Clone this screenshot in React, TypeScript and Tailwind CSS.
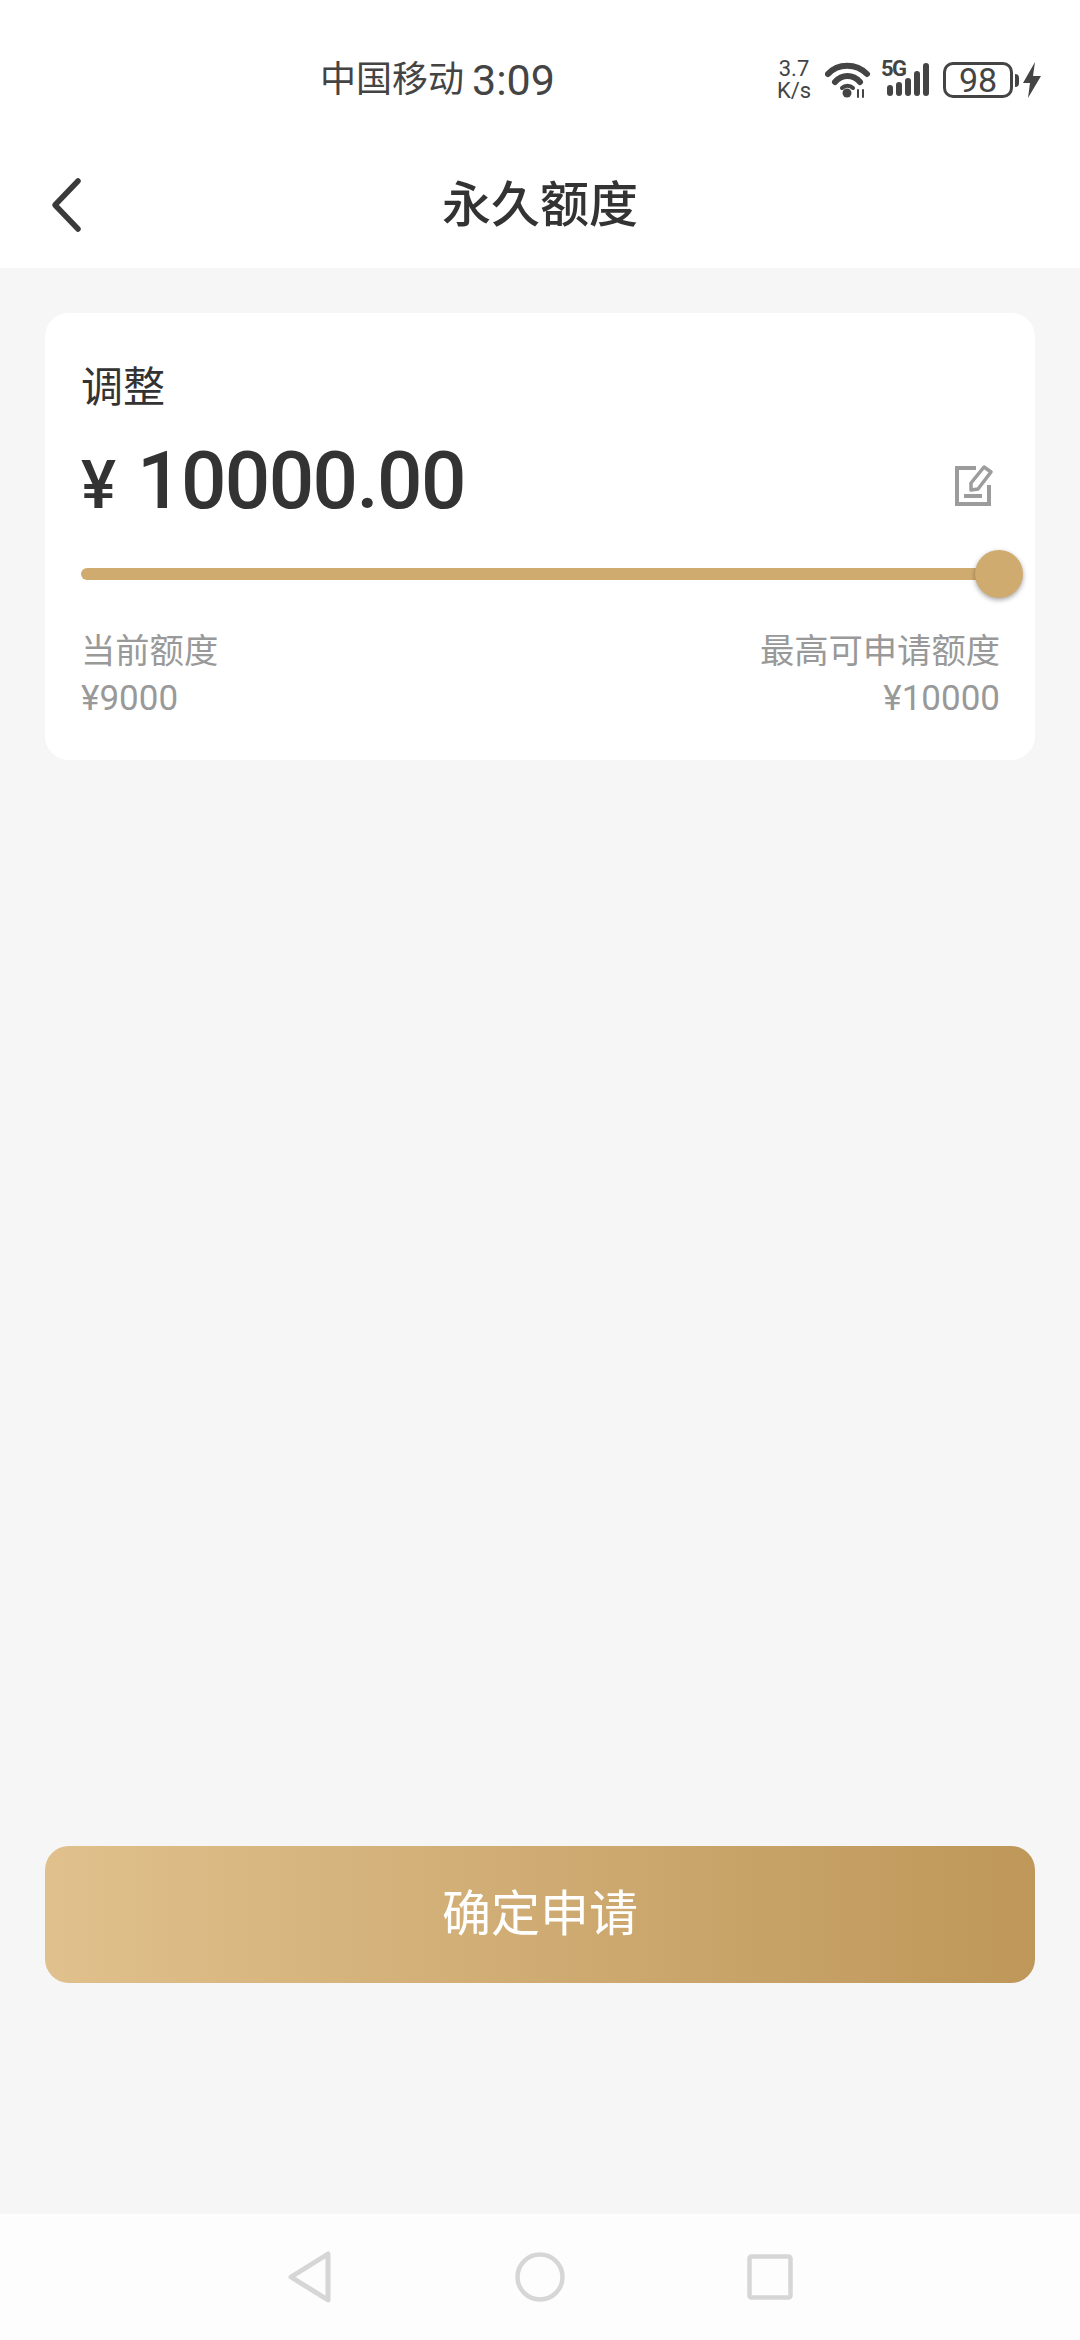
const font = { fontFamily: '"Roboto", "Noto Sans CJK SC", sans-serif' };

const StatusBar = () => (
  <div className="flex h-[110px] items-center pt-[50px] text-[#444]">
    <div className="ml-[320px] flex items-center">
      <span className="text-[36px] leading-none">中国移动</span>
      <span className="ml-[8px] text-[43px] leading-none">3:09</span>
    </div>
    <div className="ml-auto mr-[38px] flex items-center">
      <div className="flex w-[36px] flex-col items-center text-[22px] leading-[22px]">
        <span>3.7</span>
        <span>K/s</span>
      </div>
      <svg width="46" height="36" viewBox="0 0 46 36" className="ml-[13px]" fill="none" stroke="#444" strokeLinecap="round">
        <path d="M3 12 C13 1 31 1 42 12" strokeWidth="6" />
        <path d="M10 20 C17 12 28 12 35 20" strokeWidth="6" />
        <path d="M17 26 C20 23 25 23 28 26" strokeWidth="4" />
        <circle cx="22" cy="31" r="4.5" fill="#444" stroke="none" />
        <path d="M33 28 v7 M38 28 v7" strokeWidth="2" />
      </svg>
      <div className="relative ml-[10px] h-[36px] w-[52px]">
        <span className="absolute left-0 top-[-4px] text-[22px] font-bold leading-none tracking-[-1.5px]">5G</span>
        <svg width="52" height="36" viewBox="0 0 52 36" fill="#444">
          <rect x="6" y="23" width="6" height="11" rx="3" />
          <rect x="15" y="20" width="6" height="14" rx="3" />
          <rect x="24" y="16" width="6" height="18" rx="3" />
          <rect x="33" y="9" width="6" height="25" rx="3" />
          <rect x="42" y="1" width="6" height="33" rx="3" />
        </svg>
      </div>
      <div className="ml-[10px] flex h-[36px] w-[70px] items-center justify-center rounded-[10px] border-[3px] border-[#444] text-[34px] leading-none">
        98
      </div>
      <div className="ml-[2px] h-[13px] w-[4px] rounded-r-full bg-[#444]" />
      <svg width="20" height="36" viewBox="0 0 20 36" className="ml-[3px]" fill="#444">
        <path d="M13 0 L1 21 H8 L6 36 L19 14 H11 Z" />
      </svg>
    </div>
  </div>
);

const Header = () => (
  <div className="relative flex h-[158px] items-center justify-center pt-[32px]">
    <svg width="36" height="56" viewBox="0 0 36 56" className="absolute left-[49px] top-[67px]" fill="none" stroke="#3a3a3a" strokeWidth="5.5" strokeLinecap="round" strokeLinejoin="round">
      <path d="M29 4 L6 28 L29 52" />
    </svg>
    <span className="text-[49px] font-medium leading-none text-[#333]">永久额度</span>
  </div>
);

const AdjustCard = () => (
  <div className="h-[447px] rounded-[24px] bg-white pl-[36px] pr-[35px] pt-[50px]">
    <div className="text-[42px] leading-[50px] text-[#333]">调整</div>
    <div className="mt-[21px] flex items-center justify-between">
      <div className="flex items-baseline text-[#333]">
        <span className="text-[66px] font-medium leading-none">¥</span>
        <span className="ml-[21px] text-[80px] font-medium leading-[94px] tracking-[-1.6px]">10000.00</span>
      </div>
      <svg width="40" height="44" viewBox="0 0 40 44" className="mr-[6px] mt-[8px]" fill="none" stroke="#9c9c9c" strokeWidth="4">
        <path d="M22 5 H3 V41 H35 V22" />
        <path d="M10 33 H28" />
        <path d="M17 27 V20 L30 4 L37 9 L24 26 Z" strokeLinejoin="round" strokeWidth="3.5" />
      </svg>
    </div>
    <div className="relative mt-[40px] mr-[2px] h-[12px] rounded-full bg-[#d0ab6f]">
      <div className="absolute right-[-25px] top-[-18px] h-[48px] w-[48px] rounded-full bg-[#d0ab6f] shadow-[0_2px_5px_rgba(0,0,0,0.35)]" />
    </div>
    <div className="mt-[47px] flex justify-between text-[#999]">
      <div>
        <div className="text-[34.3px] leading-[48px]">当前额度</div>
        <div className="text-[35px] leading-[48px]">¥9000</div>
      </div>
      <div className="text-right">
        <div className="text-[34.3px] leading-[48px]">最高可申请额度</div>
        <div className="text-[35px] leading-[48px]">¥10000</div>
      </div>
    </div>
  </div>
);

const NavBar = () => (
  <div className="flex h-[126px] items-center justify-center gap-[182px] bg-[#fdfdfd]">
    <svg width="46" height="54" viewBox="0 0 46 54" fill="none" stroke="#d6d6d6" strokeWidth="5" strokeLinejoin="round">
      <path d="M41 4 V50 L4 27 Z" />
    </svg>
    <svg width="50" height="50" viewBox="0 0 50 50" fill="none" stroke="#d6d6d6" strokeWidth="4.5">
      <circle cx="25" cy="25" r="22.5" />
    </svg>
    <svg width="46" height="46" viewBox="0 0 46 46" fill="none" stroke="#d6d6d6" strokeWidth="4.5" strokeLinejoin="round">
      <rect x="2.5" y="2.5" width="41" height="41" rx="2" />
    </svg>
  </div>
);

export default function App() {
  return (
    <div className="flex h-[2340px] w-[1080px] flex-col overflow-hidden bg-[#f6f6f6]" style={font}>
      <div className="bg-white">
        <StatusBar />
        <Header />
      </div>
      <div className="flex flex-1 flex-col px-[45px] pt-[45px]">
        <AdjustCard />
        <button className="mt-auto mb-[231px] h-[137px] rounded-[24px] bg-gradient-to-r from-[#e0c08c] to-[#be9759] text-[49px] text-white">
          确定申请
        </button>
      </div>
      <NavBar />
    </div>
  );
}
